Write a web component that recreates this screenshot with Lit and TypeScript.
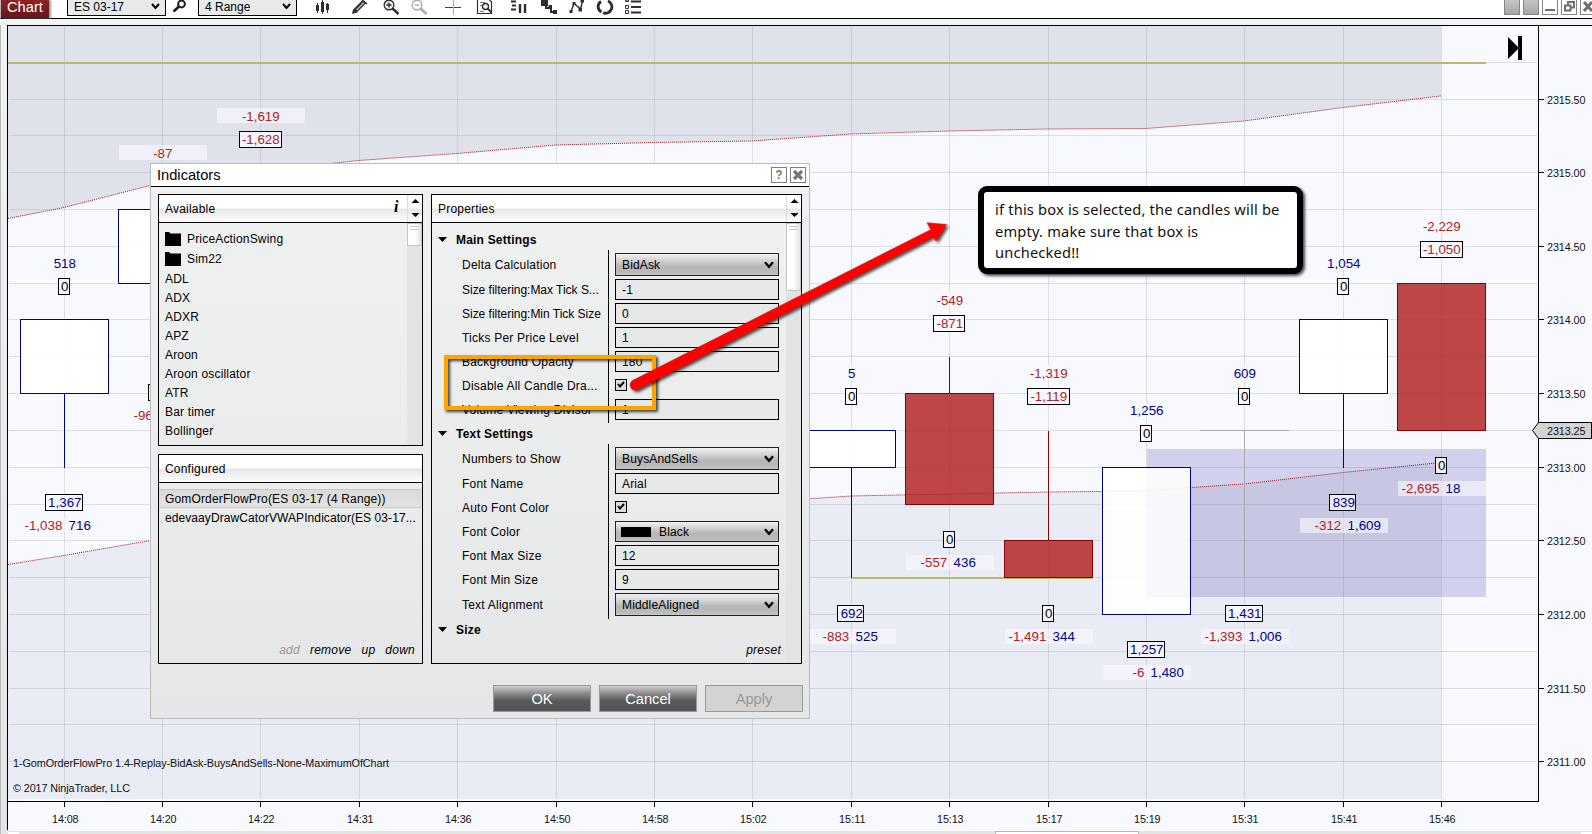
import { LitElement, html, svg, css, nothing } from "lit";
import { customElement, property } from "lit/decorators.js";

const COLS = [64, 162, 260, 359, 457, 556, 654, 752, 851, 949, 1048, 1146, 1244, 1343, 1441];
const TIMES = ["14:08", "14:20", "14:22", "14:31", "14:36", "14:50", "14:58", "15:02", "15:11", "15:13", "15:17", "15:19", "15:31", "15:41", "15:46"];
const ROWS = [62, 99, 135, 172, 209, 246, 283, 319, 356, 393, 430, 467, 504, 540, 577, 614, 651, 688, 724, 761];
const PRICES: [number, string][] = [
  [99, "2315.50"], [172, "2315.00"], [246, "2314.50"], [319, "2314.00"], [393, "2313.50"],
  [467, "2313.00"], [540, "2312.50"], [614, "2312.00"], [688, "2311.50"], [761, "2311.00"],
];

interface Candle { x: number; top: number; bottom: number; up: boolean; wick?: [number, number]; }
const CANDLES: Candle[] = [
  { x: 64, top: 319, bottom: 394, up: true, wick: [394, 468] },
  { x: 162, top: 209, bottom: 284, up: true },
  { x: 851, top: 430, bottom: 468, up: true, wick: [468, 578] },
  { x: 949, top: 393, bottom: 505, up: false, wick: [357, 393] },
  { x: 1048, top: 540, bottom: 578, up: false, wick: [431, 540] },
  { x: 1146, top: 467, bottom: 615, up: true },
  { x: 1343, top: 319, bottom: 394, up: true, wick: [394, 468] },
  { x: 1441, top: 283, bottom: 431, up: false },
];

interface Marks { x: number; topY?: number; delta?: string; high?: string; lowY?: number; low?: string; sell?: string; buy?: string; }
const MARKS: Marks[] = [
  { x: 64, topY: 278, delta: "518", high: "0", lowY: 494, low: "1,367", sell: "-1,038", buy: "716" },
  { x: 162, topY: 168, delta: "-87" },
  { x: 260, topY: 131, delta: "-1,619", high: "-1,628" },
  { x: 851, topY: 388, delta: "5", high: "0", lowY: 605, low: "692", sell: "-883", buy: "525" },
  { x: 949, topY: 315, delta: "-549", high: "-871", lowY: 531, low: "0", sell: "-557", buy: "436" },
  { x: 1048, topY: 388, delta: "-1,319", high: "-1,119", lowY: 605, low: "0", sell: "-1,491", buy: "344" },
  { x: 1146, topY: 425, delta: "1,256", high: "0", lowY: 641, low: "1,257", sell: "-6", buy: "1,480" },
  { x: 1244, topY: 388, delta: "609", high: "0", lowY: 605, low: "1,431", sell: "-1,393", buy: "1,006" },
  { x: 1343, topY: 278, delta: "1,054", high: "0", lowY: 494, low: "839", sell: "-312", buy: "1,609" },
  { x: 1441, topY: 241, delta: "-2,229", high: "-1,050", lowY: 457, low: "0", sell: "-2,695", buy: "18" },
];

const UPPER = "8,218.5 64,207.5 148,186 162,182.5 260,171 340,162.5 359,160.5 457,153.5 556,145 654,142.5 752,141 851,134 949,131 1048,129 1146,128.5 1244,121 1343,107.5 1441,96";
const LOWER = "8,564.5 64,555.5 148,541 359,520 654,508 810,498.7 851,496 949,494 1048,492 1100,491.5 1146,490.5 1244,484 1343,472.5 1441,462.5";

@customElement("price-chart")
export class PriceChart extends LitElement {
  static styles = css`
    :host { display: block; height: 809px; }
    svg { display: block; font-family: "Liberation Sans", Arial, sans-serif; }
    .axis { font-size: 10.8px; fill: #111; }
    .num { font-size: 13.33px; }
    .neg { fill: #b22222; }
    .pos { fill: #00008b; }
    .zero { fill: #000; }
  `;

  private boxed(x: number, y: number, t: string) {
    const n = t.length;
    const l = n === 1 ? 6 : n === 3 ? 14 : n === 4 ? 16 : n === 5 ? 19 : 21;
    const w = n === 1 ? 11 : n === 3 ? 26 : n === 4 ? 31 : n === 5 ? 37 : 42;
    const cls = t === "0" ? "zero" : t.startsWith("-") ? "neg" : "pos";
    return svg`<rect x=${x - l + 0.5} y=${y + 0.5} width=${w} height="16" fill="#f8f8ff" fill-opacity=".8" stroke="#000"/>
      <text class="num ${cls}" x=${x + 0.8} y=${y + 13} text-anchor="middle">${t}</text>`;
  }

  private marks(m: Marks) {
    return svg`
      ${m.topY !== undefined ? svg`
        <rect x=${m.x - 43} y=${m.topY - 23} width="88" height="15" fill="#f8f8ff" fill-opacity=".66"/>
        <text class="num ${m.delta!.startsWith("-") ? "neg" : "pos"}" x=${m.x + 0.8} y=${m.topY - 10} text-anchor="middle">${m.delta}</text>
        ${m.high ? this.boxed(m.x, m.topY, m.high) : nothing}` : nothing}
      ${m.lowY !== undefined ? svg`
        <rect x=${m.x - 43} y=${m.lowY + 24} width="88" height="15" fill="#f8f8ff" fill-opacity=".6"/>
        <text class="num neg" x=${m.x - 1.7} y=${m.lowY + 36} text-anchor="end">${m.sell}</text>
        <text class="num pos" x=${m.x + 4.6} y=${m.lowY + 36}>${m.buy}</text>
        ${this.boxed(m.x, m.lowY, m.low!)}` : nothing}`;
  }

  render() {
    return html`<svg width="1592" height="809" viewBox="0 25 1592 809">
      <defs>
        <linearGradient id="edge" x1="0" y1="0" x2="0" y2="1">
          <stop offset="0" stop-color="#f1f3f2"/><stop offset="1" stop-color="#e3e4e5"/>
        </linearGradient>
      </defs>
      <rect x="0" y="25" width="8" height="809" fill="url(#edge)"/>
      <rect x="0" y="25" width="1" height="809" fill="#b9b9b9"/>
      <rect x="8" y="26" width="1584" height="804" fill="#f8f9ff"/>
      <polygon points="8,26 ${UPPER} 1441,26" fill="#dfe2eb"/>
      <polygon points="8,799 ${LOWER} 1441,799" fill="#e9ecf4"/>
      <g fill="#8c8c8c" fill-opacity=".24">
        ${COLS.map((x) => svg`<rect x=${x} y="26" width="1" height="773"/>`)}
        ${ROWS.map((y) => svg`<rect x="9" y=${y} width="1528" height="1"/>`)}
      </g>
      <rect x="1147" y="449" width="339" height="148" fill="rgba(90,82,180,.24)"/>
      <g fill="none" stroke="#a01818" stroke-width="1" stroke-dasharray="1 1">
        <polyline points=${UPPER}/><polyline points=${LOWER}/>
      </g>
      <rect x="8" y="62" width="1478" height="2" fill="#bdb76b"/>
      <rect x="852" y="577" width="241" height="2" fill="#bdb76b"/>
      ${CANDLES.map((c) => svg`
        <rect x=${c.x - 43.5} y=${c.top + 0.5} width="88" height=${c.bottom - c.top - 1}
          fill=${c.up ? "#fff" : "#b22222"} fill-opacity=${c.up ? ".88" : ".83"} stroke=${c.up ? "#00008b" : "#8b0000"}/>
        ${c.wick ? svg`<rect x=${c.x} y=${c.wick[0]} width="1" height=${c.wick[1] - c.wick[0]} fill=${c.up ? "#00008b" : "#8b0000"}/>` : nothing}`)}
      <rect x="1200" y="430" width="89" height="1" fill="#a9a9a9"/>
      <rect x="1244" y="430" width="1" height="148" fill="#a9a9a9"/>
      ${MARKS.map((m) => this.marks(m))}
      <rect x="148.5" y="384.500" width="26" height="16" fill="#f8f8ff" stroke="#000"/>
      <text class="num neg" x="133.500" y="420">-96</text>
      <rect x="7" y="25" width="1585" height="1"/>
      <rect x="7" y="25" width="1" height="805"/>
      <rect x="1538" y="25" width="1" height="777"/>
      <rect x="8" y="801" width="1531" height="1"/>
      ${PRICES.map(([y, t]) => svg`<rect x="1539" y=${y} width="5" height="1"/>
        <text class="axis" x="1547" y=${y + 5} textLength="38.5">${t}</text>`)}
      ${COLS.map((x, i) => svg`<rect x=${x} y="802" width="1" height="5"/>
        <text class="axis" x=${x + 1.3} y="822.5" text-anchor="middle" textLength="26.5">${TIMES[i]}</text>`)}
      <polygon points="1532.5,430.5 1538.5,422.5 1591.5,422.5 1591.5,438.5 1538.5,438.5" fill="#d3d3d3" stroke="#000"/>
      <text class="axis" x="1547" y="435" textLength="38.5">2313.25</text>
      <polygon points="1508,37 1519,48 1508,59"/><rect x="1518" y="36" width="4" height="24"/>
      <text class="axis" x="13" y="767" textLength="376">1-GomOrderFlowPro 1.4-Replay-BidAsk-BuysAndSells-None-MaximumOfChart</text>
      <text class="axis" x="13" y="792" textLength="117">© 2017 NinjaTrader, LLC</text>
      <rect x="8" y="830" width="1584" height="1" fill="#fbfbfb"/>
      <rect x="8" y="831" width="1584" height="3" fill="#e3e3e3"/>
      <rect x="8" y="832" width="11" height="2" fill="#fff"/>
      <rect x="995.5" y="831.5" width="143" height="6" fill="#fff" stroke="#b8b8b8"/>
      <rect x="1581" y="832" width="11" height="2" fill="#fff"/>
    </svg>`;
  }
}

@customElement("chart-toolbar")
export class ChartToolbar extends LitElement {
  static styles = css`
    :host { display: block; height: 25px; font: 12px/14px "Liberation Sans", Arial, sans-serif; background: #f2f3f3; }
    .bar { height: 18px; border-bottom: 1px solid #000; background: #fff; display: flex; align-items: flex-start; border-left: 1px solid #b9b9b9; box-sizing: content-box; width: 1591px; }
    .tab { width: 48px; height: 18px; background: linear-gradient(#8f2225, #64161a); color: #fff; font-size: 14.67px; line-height: 14px; padding-left: 6px; box-sizing: border-box; box-shadow: 2px 0 2px #999; }
    .combo { width: 99px; height: 16px; border: 1px solid #000; border-top: 0; box-sizing: border-box; background: #e8eae9; display: flex; justify-content: space-between; padding: 0 5px 0 6px; }
    .first { margin-left: 18px; }
    .combo svg { margin-top: 3px; }
    .icons { display: block; }
    .lens { width: 32px; }
    .spacer { flex: 1; }
    .win { display: flex; gap: 3px; width: 88px; overflow: hidden; }
    .btn { width: 16px; height: 15px; box-sizing: border-box; border: 1px solid #858585; border-top: 0; background: #fff; display: block; flex: none; }
    .fill { background: linear-gradient(#c6c3c4, #a9a5a7); }
  `;
  private arrow = html`<svg width="9" height="7"><path d="M1 1 L4.5 5 L8 1" fill="none" stroke="#000" stroke-width="2"/></svg>`;
  render() {
    return html`<div class="bar">
      <div class="tab">Chart</div>
      <div class="combo first"><span>ES 03-17</span>${this.arrow}</div>
      <svg class="lens" height="17" viewBox="166 0 32 17"><circle cx="181.5" cy="4" r="3.4" fill="none" stroke="#1c1c1c" stroke-width="2"/><path d="M179 6.5 L173.5 11.5" stroke="#1c1c1c" stroke-width="2.6"/></svg>
      <div class="combo"><span>4 Range</span>${this.arrow}</div>
      <svg class="icons" width="360" height="17" viewBox="297 0 360 17" fill="none" stroke="#2e2e2e">
        <path d="M317.5 3v10M322.5 0v14M327.5 3v10" stroke-width="1"/>
        <path d="M317.5 5v6M322.5 2v10M327.5 4v6" stroke-width="3"/>
        <path d="M354.500 11.5 L364.5 1.5" stroke-width="4.6"/><path d="M356.5 10.2 L364 2.5" stroke="#c8ccd8" stroke-width="1.2"/><path d="M352 14l1-4.5 3.5 3.2z" fill="#2e2e2e" stroke="none"/><path d="M362 0l5 4" stroke-width="1.4"/>
        <circle cx="389" cy="5" r="4.8" fill="#eef2f8" stroke-width="1.4"/><path d="M386.5 5h5M389 2.5v5" stroke-width="1.4"/><path d="M392.5 8.5l6 5.5" stroke-width="2.4"/>
        <g stroke="#aaa"><circle cx="417" cy="5" r="4.8" stroke-width="1.4"/><path d="M414.5 5h5" stroke-width="1.4"/><path d="M420.5 8.5l6 5.5" stroke-width="2.4"/></g>
        <path d="M445 7.5h16" stroke="#444"/><path d="M453.5 0v15" stroke="#8fb6d4"/>
        <path d="M477.5 0v13.500h14V2l-2-2" stroke-width="1.2"/><path d="M480 2.500h5M480 5.500h2M480 11.500h4" stroke="#777"/><circle cx="485.500" cy="6.500" r="3" stroke-width="1.300"/><path d="M487.500 8.500l4 4" stroke-width="1.8"/>
        <path d="M511 1.500h5M512 5.500h4M511 9.500h5" stroke-width="2"/><path d="M520 4v9M525 4v9" stroke-width="2.4"/>
        <path d="M541 0h7v6h-7zM548.500 5h3.500v4h-3.500zM553 10h4v4h-4z" fill="#2e2e2e" stroke="none"/><path d="M546 6v2h5v4h4" stroke-width="2"/>
        <path d="M571 11.500L574 3.500 L580.500 9 L582.500 1" stroke-width="1.4"/><path d="M569.500 10h3v3h-3zM572.500 2h3v3h-3zM578.500 8h3.500v3.500h-3.500zM580.500 0h3.500v2.500h-3.500z" fill="#2e2e2e" stroke="none"/>
        <path d="M601.500 12A6 6 0 0 1 601 1.500M608 1A6 6 0 0 1 603 12.700" stroke-width="2.8"/>
        <path d="M625.500 0h3v1.500h-3zM625.500 5.500h3v3h-3zM625.500 10.500h3v3h-3z"/><path d="M631 1.500h10M631 7h10M631 12.500h10" stroke-width="1.8"/>
      </svg>
      <div class="spacer"></div>
      <div class="win">
        <span class="btn fill"></span><span class="btn fill"></span>
        <svg class="btn" viewBox="0 0 14 14"><path d="M2 10h10" stroke="#6f6f6f" stroke-width="2"/></svg>
        <svg class="btn" viewBox="0 0 14 14" fill="none" stroke="#6f6f6f" stroke-width="2"><path d="M6 5V2h6v5.500H9.500M3 5.500h5.500v5H3z"/></svg>
        <svg class="btn" viewBox="0 0 14 14"><path d="M3 2l8 9M11 2l-8 9" stroke="#6f6f6f" stroke-width="3"/></svg>
      </div>
    </div>`;
  }
}

type Row = { label: string; kind: "select" | "text" | "check" | "color"; value?: string };
const MAIN: Row[] = [
  { label: "Delta Calculation", kind: "select", value: "BidAsk" },
  { label: "Size filtering:Max Tick S...", kind: "text", value: "-1" },
  { label: "Size filtering:Min Tick Size", kind: "text", value: "0" },
  { label: "Ticks Per Price Level", kind: "text", value: "1" },
  { label: "Background Opacity", kind: "text", value: "180" },
  { label: "Disable All Candle Dra...", kind: "check" },
  { label: "Volume Viewing Divisor", kind: "text", value: "1" },
];
const TEXT: Row[] = [
  { label: "Numbers to Show", kind: "select", value: "BuysAndSells" },
  { label: "Font Name", kind: "text", value: "Arial" },
  { label: "Auto Font Color", kind: "check" },
  { label: "Font Color", kind: "color", value: "Black" },
  { label: "Font Max Size", kind: "text", value: "12" },
  { label: "Font Min Size", kind: "text", value: "9" },
  { label: "Text Alignment", kind: "select", value: "MiddleAligned" },
];

@customElement("property-group")
export class PropertyGroup extends LitElement {
  @property({ attribute: false }) rows: Row[] = [];
  @property() heading = "";
  static styles = css`
    :host { display: block; }
    .head { height: 21px; display: flex; align-items: center; gap: 9px; padding-left: 6px; font-weight: bold; font-size: 12px; letter-spacing: .2px; }
    .head span { line-height: 22px; padding-top: 1px; }
    .row { display: grid; grid-template-columns: 147px 1fr; height: 24px; margin-left: 30px; }
    .row.select { height: 27px; }
    .row.lead { height: 28px; }
    .row.tail { height: 25px; }
    .row.select.tail { height: 27px; }
    .label { border-right: 1px solid #000; line-height: 25px; letter-spacing: .22px; white-space: nowrap; }
    .label.long { letter-spacing: -.02px; }
    .select .label { line-height: 27px; }
    .lead .label { line-height: 31px; }
    .field { box-sizing: border-box; width: 164px; height: 21px; border: 1px solid #000; margin: 1px 0 0 6px; padding: 0 6px; line-height: 20px; letter-spacing: .15px; background: #e7e9e8; display: flex; align-items: center; }
    .drop { background: linear-gradient(#f2f2f2, #b6b6b6 60%, #b9b9b9 85%, #c6c6c6); border-color: #222; justify-content: space-between; padding-right: 4px; }
    .select .drop { height: 23px; }
    .lead .drop { margin-top: 3px; }
    .swatch { width: 30px; height: 10px; background: #000; margin: 0 8px 0 -1px; }
    .name { flex: 1; }
    .check { display: block; width: 12px; height: 12px; margin: 5px 0 0 6px; }
  `;
  render() {
    return html`<div class="head"><svg width="9" height="5"><path d="M0 0h9L4.500 5z"/></svg><span>${this.heading}</span></div>
      ${this.rows.map((r, i) => html`<div class="row ${r.kind === "select" ? "select" : ""} ${i === 0 ? "lead" : ""} ${i === this.rows.length - 1 ? "tail" : ""}">
        <div class="label ${r.label.length > 26 ? "long" : ""}">${r.label}</div>
        ${r.kind === "check"
          ? html`<svg class="check" viewBox="0 0 12 12"><rect x=".5" y=".5" width="11" height="11" fill="#dcdcdc" stroke="#000"/><path d="M3 5l2 2.500 4-4.500" fill="none" stroke="#000" stroke-width="1.900"/></svg>`
          : html`<div class="field ${r.kind === "text" ? "" : "drop"}">
              ${r.kind === "color" ? html`<span class="swatch"></span>` : nothing}
              <span class="name">${r.value}</span>
              ${r.kind === "text" ? nothing : html`<svg width="10" height="8"><path d="M1 1.200L5 5.800L9 1.200" fill="none" stroke="#000" stroke-width="2.200"/></svg>`}
            </div>`}
      </div>`)}`;
  }
}

@customElement("indicators-dialog")
export class IndicatorsDialog extends LitElement {
  static styles = css`
    :host { display: flex; flex-direction: column; box-sizing: border-box; width: 660px; height: 556px; border: 1px solid #bcbcbc; background: linear-gradient(#f0f2f1, #eceeee 40%, #ebecec 50%, #e5e6e7); font: 12px/19px "Liberation Sans", Arial, sans-serif; color: #000; }
    .title { height: 22px; background: #fff; border-bottom: 1px solid #000; display: flex; align-items: flex-start; padding: 0 3px 0 6px; gap: 3px; }
    .title b { flex: 1; font-weight: normal; font-size: 14.67px; line-height: 22px; }
    .sq { box-sizing: border-box; width: 16px; height: 16px; border: 1px solid #7d7d7d; margin-top: 3px; display: block; text-align: center; line-height: 14px; font-weight: bold; color: #777; font-size: 12px; }
    .cols { display: flex; gap: 8px; padding: 7px 7px 0; }
    .left { display: flex; flex-direction: column; gap: 8px; }
    .panel { box-sizing: border-box; border: 1px solid #000; display: flex; flex-direction: column; }
    .available { width: 265px; height: 252px; }
    .configured { width: 265px; height: 210px; }
    .props { width: 371px; height: 470px; }
    .phead { height: 27px; border-bottom: 1px solid #000; background: linear-gradient(#fff 0 48%, #e6e6e6 52%, #fdfdfd); display: flex; line-height: 28px; padding-left: 6px; letter-spacing: .2px; }
    .phead span { flex: 1; }
    .info { font: italic bold 16px/24px "Liberation Serif", serif; width: 13px; }
    .sort { width: 15px; border-left: 1px solid #ddd; box-sizing: border-box; }
    .sort svg { display: block; }
    .body { flex: 1; display: flex; min-height: 0; }
    .list { flex: 1; padding: 6px 0 0 6px; letter-spacing: .18px; }
    .name { line-height: 21px; height: 19px; }
    .folder { display: flex; align-items: center; gap: 6px; height: 20px; }
    .track { width: 15px; background: #e3e3e3; }
    .thumb { box-sizing: border-box; height: 23px; border: 1px solid #c4c4c4; background: linear-gradient(90deg, #fff 50%, #e4e4e4); display: flex; flex-direction: column; align-items: center; gap: 2px; padding-top: 2px; }
    .props .thumb { height: 68px; }
    .thumb i { width: 9px; height: 1px; background: #ccc; }
    .conf { flex: 1; display: flex; flex-direction: column; padding-top: 6px; }
    .item { padding-left: 6px; height: 19px; line-height: 20px; letter-spacing: .08px; white-space: nowrap; }
    .sel { box-sizing: border-box; border: 1px solid #c8c8c8; border-width: 1px 0; line-height: 18px; letter-spacing: .15px; background: linear-gradient(#dadada, #e2e2e2); }
    .links { margin-top: auto; display: flex; justify-content: flex-end; gap: 10px; padding: 0 7px 3px 0; font-style: italic; letter-spacing: .25px; }
    .dim { color: #999; }
    .grid { flex: 1; display: flex; flex-direction: column; padding-top: 6px; }
    .grid .links { padding-right: 5px; }
    .actions { display: flex; justify-content: flex-end; gap: 8px; padding: 21px 6px 0 0; }
    .action { box-sizing: border-box; width: 98px; height: 27px; border: 1px solid #9a9a9a; color: #fff; font-size: 14.67px; line-height: 26px; text-align: center; background: linear-gradient(#cfcfcf, #8f8f90 28%, #57585a 60%, #555658); }
    .off { background: #d3d3d3; color: #979797; border-color: #999; }
  `;
  private sort = html`<div class="sort"><svg width="14" height="27"><path d="M3.500 8h8L7.500 4zM3.500 18h8l-4 4z"/></svg></div>`;
  render() {
    return html`
      <div class="title"><b>Indicators</b><span class="sq">?</span>
        <svg class="sq" viewBox="0 0 14 14"><path d="M3 3l8 8M11 3l-8 8" stroke="#777" stroke-width="3.200"/></svg></div>
      <div class="cols">
        <div class="left">
          <div class="panel available">
            <div class="phead"><span>Available</span><div class="info">i</div>${this.sort}</div>
            <div class="body">
              <div class="list">
                ${["PriceActionSwing", "Sim22"].map((n) => html`<div class="folder"><svg width="16" height="14"><path d="M0 0h4l1.500 1.500H16V14H0z"/></svg>${n}</div>`)}
                ${["ADL", "ADX", "ADXR", "APZ", "Aroon", "Aroon oscillator", "ATR", "Bar timer", "Bollinger"].map((n) => html`<div class="name">${n}</div>`)}
              </div>
              <div class="track"><div class="thumb"><i></i><i></i></div></div>
            </div>
          </div>
          <div class="panel configured">
            <div class="phead"><span>Configured</span></div>
            <div class="conf">
              <div class="item sel">GomOrderFlowPro(ES 03-17 (4 Range))</div>
              <div class="item">edevaayDrawCatorVWAPIndicator(ES 03-17...</div>
              <div class="links"><span class="dim">add</span><span>remove</span><span>up</span><span>down</span></div>
            </div>
          </div>
        </div>
        <div class="panel props">
          <div class="phead"><span>Properties</span>${this.sort}</div>
          <div class="body">
            <div class="grid">
              <property-group heading="Main Settings" .rows=${MAIN}></property-group>
              <property-group heading="Text Settings" .rows=${TEXT}></property-group>
              <property-group heading="Size"></property-group>
              <div class="links"><span>preset</span></div>
            </div>
            <div class="track"><div class="thumb"><i></i><i></i></div></div>
          </div>
        </div>
      </div>
      <div class="actions"><div class="action">OK</div><div class="action">Cancel</div><div class="action off">Apply</div></div>`;
  }
}

@customElement("app-root")
export class AppRoot extends LitElement {
  static styles = css`
    :host { display: flex; flex-direction: column; position: relative; width: 1592px; height: 834px; overflow: hidden; background: #f8f9ff; }
    .dialog { position: absolute; left: 150px; top: 163px; }
    .ring { position: absolute; left: 444px; top: 355px; width: 212px; height: 55px; box-sizing: border-box; border: 4px solid #ffa500; filter: drop-shadow(2px 2px 1.500px rgba(0,0,0,.75)); }
    .arrow { position: absolute; left: 620px; top: 210px; filter: drop-shadow(2px 2px 1.500px rgba(0,0,0,.7)); }
    .note { position: absolute; left: 978px; top: 186px; width: 325px; height: 88px; box-sizing: border-box; border: 6px solid #000; border-radius: 9px; background: #fff; box-shadow: 2px 2px 3px rgba(0,0,0,.7); padding: 7px 0 0 11px; font: 14.67px/21.500px "Noto Sans", "Open Sans", sans-serif; letter-spacing: .18px; color: #111; white-space: nowrap; }
  `;
  render() {
    return html`
      <chart-toolbar></chart-toolbar>
      <price-chart></price-chart>
      <indicators-dialog class="dialog"></indicators-dialog>
      <div class="ring"></div>
      <svg class="arrow" width="340" height="190" viewBox="620 210 340 190">
        <path d="M633 380.300 L931 229.500 L927 222.800 L946.500 224.500 L936 241 L933.500 236.500 L637.500 389.500 A5 5 0 0 1 633 380.300Z" fill="#f00" stroke="#f00" stroke-width=".6" stroke-linejoin="round"/>
      </svg>
      <div class="note">if this box is selected, the candles will be<br>empty. make sure that box is<br>unchecked!!</div>`;
  }
}
